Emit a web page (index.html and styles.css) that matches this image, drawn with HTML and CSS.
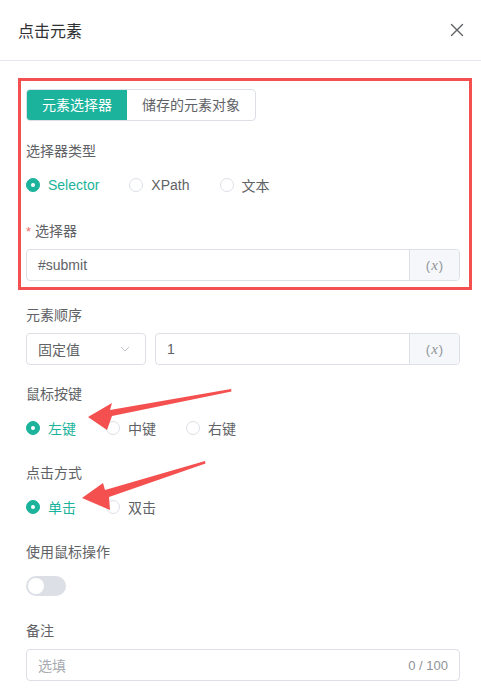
FILE: index.html
```html
<!DOCTYPE html>
<html lang="zh-CN">
<head>
    <meta charset="UTF-8">
    <meta name="viewport" content="width=device-width, initial-scale=1.0">
    <title>点击元素</title>
    <link rel="stylesheet" href="styles.css">
</head>
<body>
    <div class="drawer">
        <div class="drawer-header">
            <span class="drawer-title">点击元素</span>
            <svg class="close" width="14" height="14" viewBox="0 0 14 14">
                <path d="M1.5 1.5 L12.5 12.5 M12.5 1.5 L1.5 12.5" stroke="#606266" stroke-width="1.4" stroke-linecap="round"/>
            </svg>
        </div>

        <div class="drawer-body">
            <div class="marked">
                <div class="form-item">
                    <div class="tabs">
                        <span class="tab active">元素选择器</span>
                        <span class="tab">储存的元素对象</span>
                    </div>
                </div>

                <div class="form-item">
                    <div class="label">选择器类型</div>
                    <div class="radio-group">
                        <span class="radio checked"><i></i>Selector</span>
                        <span class="radio"><i></i>XPath</span>
                        <span class="radio"><i></i>文本</span>
                    </div>
                </div>

                <div class="form-item">
                    <div class="label"><span class="required">*</span>选择器</div>
                    <div class="input">
                        <span class="input-text">#submit</span>
                        <span class="input-suffix">(<em>x</em>)</span>
                    </div>
                </div>
            </div>

            <div class="form-item">
                <div class="label">元素顺序</div>
                <div class="order-row">
                    <div class="select">
                        <span>固定值</span>
                        <svg width="12" height="12" viewBox="0 0 12 12">
                            <path d="M2 4 L6 8 L10 4" fill="none" stroke="#c0c4cc" stroke-width="1"/>
                        </svg>
                    </div>
                    <div class="input grow">
                        <span class="input-text">1</span>
                        <span class="input-suffix">(<em>x</em>)</span>
                    </div>
                </div>
            </div>

            <div class="form-item">
                <div class="label">鼠标按键</div>
                <div class="radio-group">
                    <span class="radio checked"><i></i>左键</span>
                    <span class="radio"><i></i>中键</span>
                    <span class="radio"><i></i>右键</span>
                </div>
            </div>

            <div class="form-item">
                <div class="label">点击方式</div>
                <div class="radio-group">
                    <span class="radio checked"><i></i>单击</span>
                    <span class="radio"><i></i>双击</span>
                </div>
            </div>

            <div class="form-item">
                <div class="label">使用鼠标操作</div>
                <div class="switch-row">
                    <span class="switch"></span>
                </div>
            </div>

            <div class="form-item">
                <div class="label">备注</div>
                <div class="input">
                    <span class="input-text placeholder">选填</span>
                    <span class="count">0 / 100</span>
                </div>
            </div>
        </div>

        <!-- annotation arrows drawn over the form -->
        <svg class="arrows" width="481" height="697" viewBox="0 0 481 697">
            <polygon points="88,417 112,403 110,410 231,389 231.5,391.5 112,416 107,430" fill="#f4504f"/>
            <polygon points="82,498 103,483 105,490 205,461 205.5,463.5 109,497 110,510" fill="#f4504f"/>
        </svg>
    </div>
</body>
</html>
```

FILE: styles.css
```css
*{
    margin: 0;
    padding: 0;
    box-sizing: border-box;
}

body{
    font-family: "Liberation Sans", "Noto Sans CJK SC", sans-serif;
    font-size: 14px;
    color: #606266;
    background: #fff;
}

.drawer{
    position: relative;
    width: 481px;
    height: 697px;
    overflow: hidden;
}

.drawer-header{
    height: 61px;
    padding: 0 17px 0 18px;
    display: flex;
    align-items: center;
    justify-content: space-between;
    border-bottom: 1px solid #e4e7ed;
}

.drawer-title{
    font-size: 16px;
    color: #303133;
}

.drawer-body{
    padding: 28px 21px 0 26px;
}

.marked{
    position: relative;
    margin-bottom: 23px;
}

.marked::after{
    content: "";
    position: absolute;
    top: -11px;
    left: -8px;
    right: -12px;
    bottom: -9px;
    border: 3px solid #f4504f;
    pointer-events: none;
}

.form-item{
    margin-bottom: 18px;
}

.marked .form-item{
    margin-bottom: 19px;
}

.marked .form-item:last-child{
    margin-bottom: 0;
}

.label{
    height: 22px;
    line-height: 22px;
    margin-bottom: 7px;
    color: #606266;
}

.required{
    color: #f56c6c;
    margin-right: 4px;
    font-size: 13px;
}

/* tab switch */
.tabs{
    display: inline-flex;
    border: 1px solid #dcdfe6;
    border-radius: 4px;
    overflow: hidden;
}

.tab{
    height: 30px;
    line-height: 30px;
    padding: 0 15px;
    color: #606266;
}

.tab.active{
    background: #1bb39c;
    color: #fff;
}

/* radios */
.radio-group{
    height: 32px;
    display: flex;
    align-items: center;
}

.radio{
    display: flex;
    align-items: center;
    margin-right: 30px;
    color: #606266;
}

.radio i{
    width: 14px;
    height: 14px;
    border: 1px solid #dcdfe6;
    border-radius: 50%;
    background: #fff;
    margin-right: 8px;
    position: relative;
}

.radio.checked{
    color: #1bb39c;
}

.radio.checked i{
    background: #1bb39c;
    border-color: #1bb39c;
}

.radio.checked i::after{
    content: "";
    position: absolute;
    top: 4px;
    left: 4px;
    width: 4px;
    height: 4px;
    border-radius: 50%;
    background: #fff;
}

/* inputs */
.input{
    height: 32px;
    border: 1px solid #dcdfe6;
    border-radius: 4px;
    display: flex;
    align-items: center;
    overflow: hidden;
}

.input.grow{
    flex: 1;
}

.input-text{
    flex: 1;
    padding: 0 11px;
    color: #606266;
}

.input-text.placeholder{
    color: #a8abb2;
}

.input-suffix{
    width: 50px;
    height: 100%;
    background: #f5f7fa;
    border-left: 1px solid #dcdfe6;
    display: flex;
    align-items: center;
    justify-content: center;
    color: #909399;
    font-size: 13px;
}

.input-suffix em{
    font-family: "Liberation Serif", serif;
    font-size: 15px;
    margin: 0 1px;
}

.count{
    padding-right: 11px;
    color: #909399;
    font-size: 13px;
}

.order-row{
    display: flex;
    gap: 9px;
}

.select{
    width: 120px;
    height: 32px;
    border: 1px solid #dcdfe6;
    border-radius: 4px;
    display: flex;
    align-items: center;
    justify-content: space-between;
    padding: 0 14px 0 11px;
}

/* switch */
.switch-row{
    height: 32px;
    display: flex;
    align-items: center;
}

.switch{
    width: 40px;
    height: 20px;
    border-radius: 10px;
    background: #dcdfe6;
    position: relative;
}

.switch::after{
    content: "";
    position: absolute;
    top: 2px;
    left: 2px;
    width: 16px;
    height: 16px;
    border-radius: 50%;
    background: #fff;
}

.arrows{
    position: absolute;
    top: 0;
    left: 0;
    pointer-events: none;
}
```
